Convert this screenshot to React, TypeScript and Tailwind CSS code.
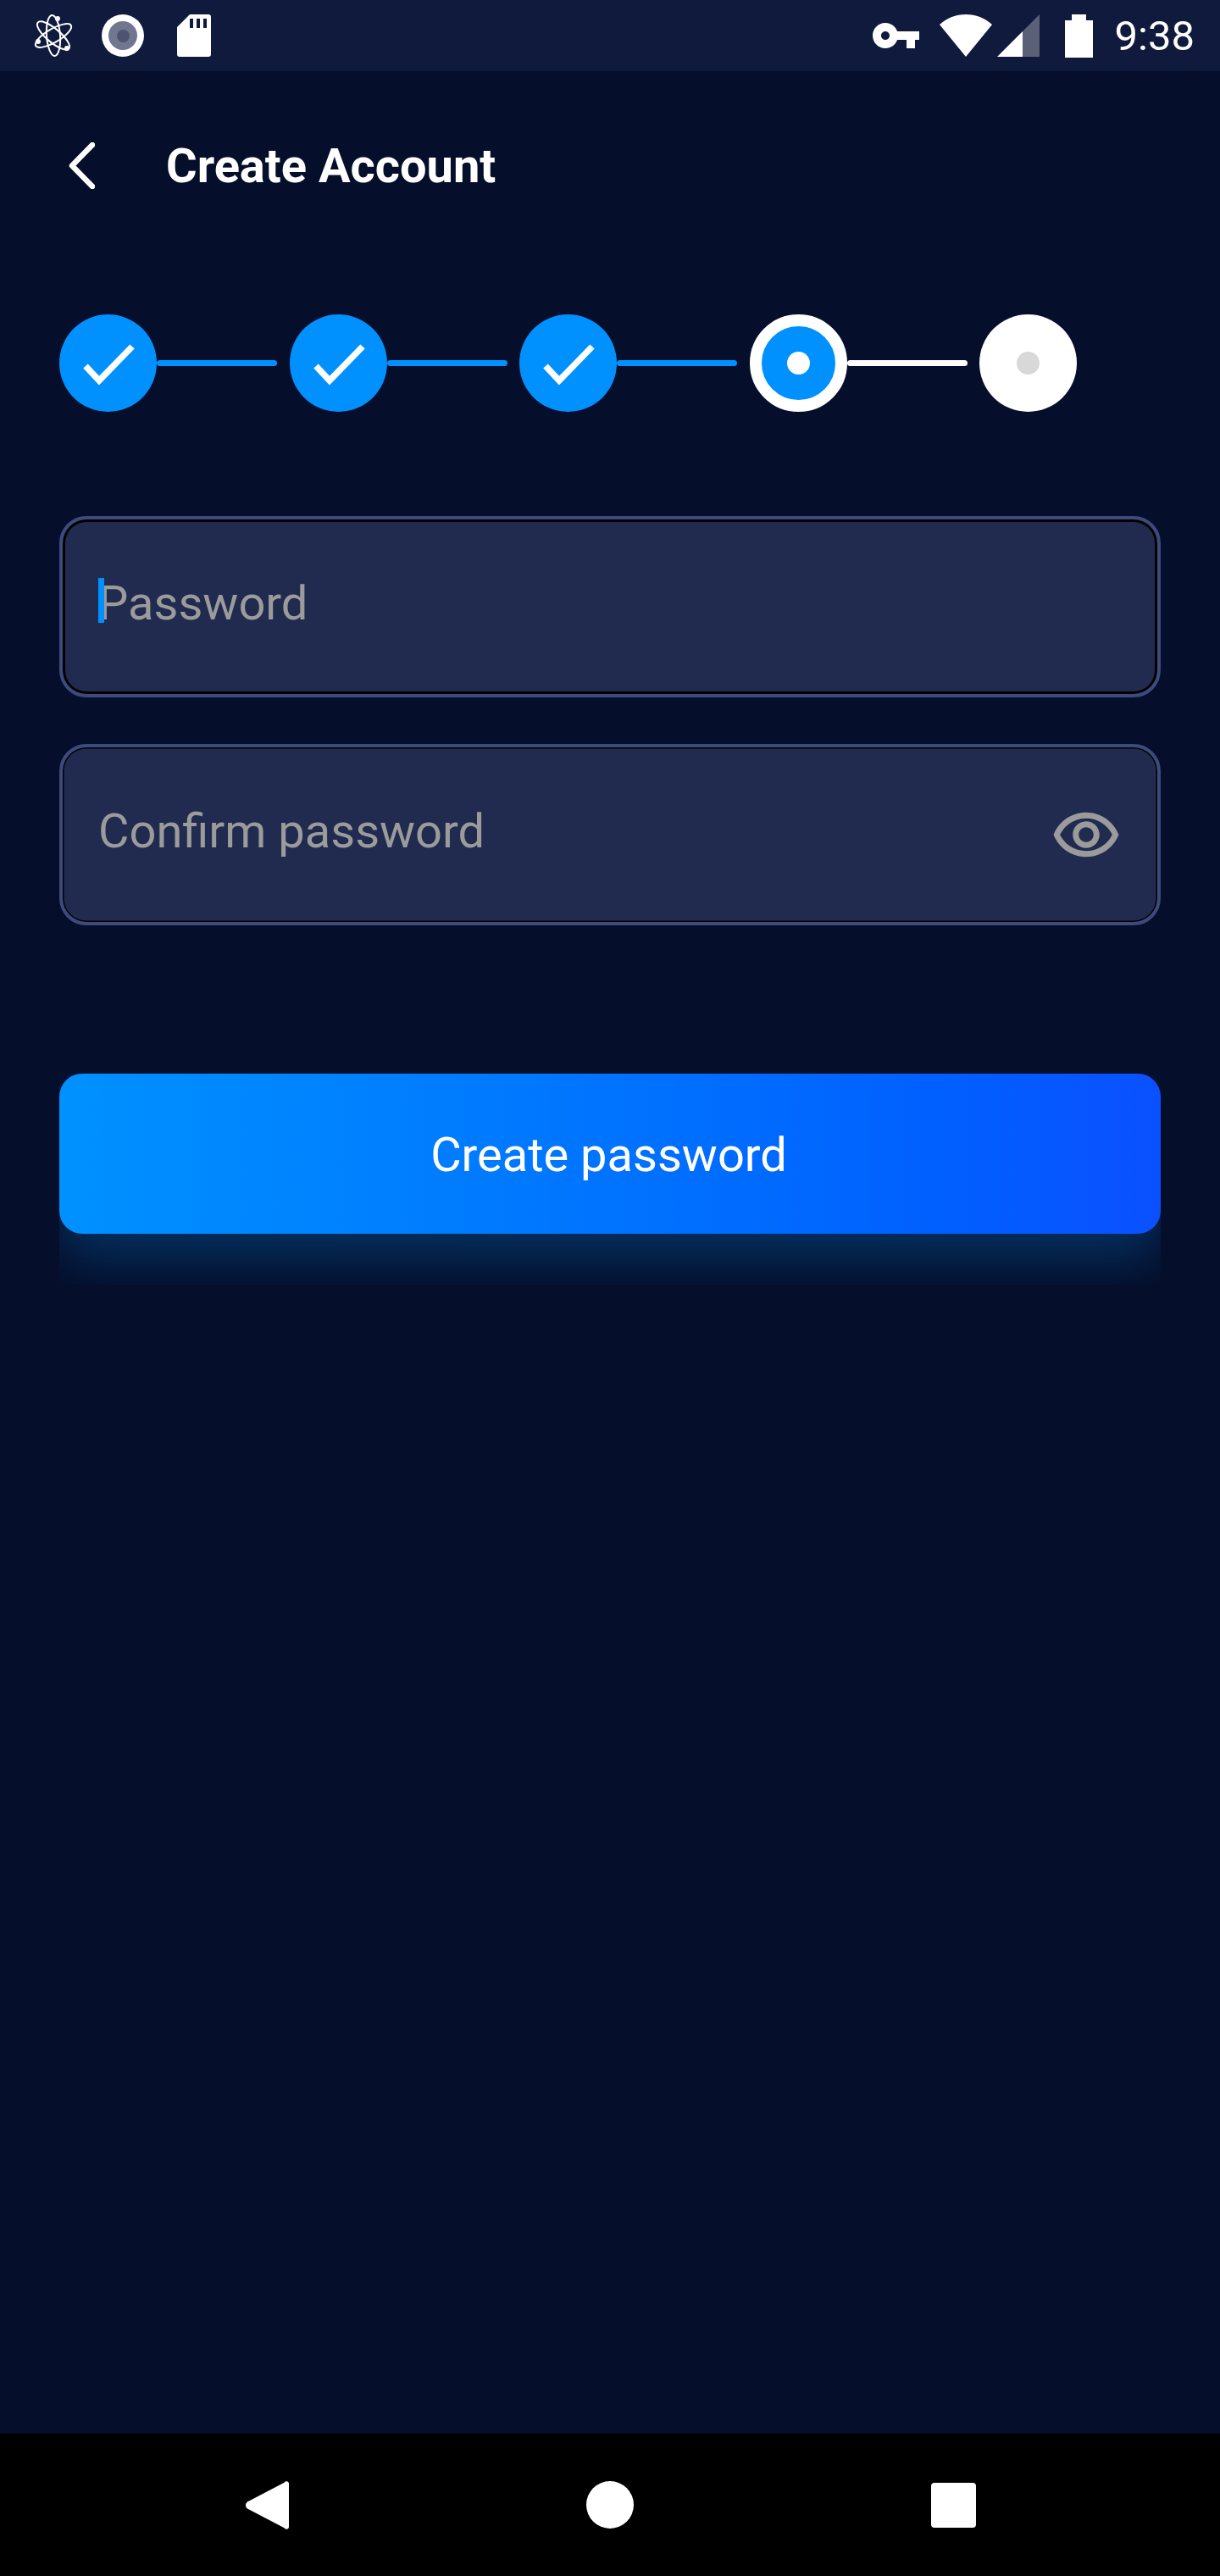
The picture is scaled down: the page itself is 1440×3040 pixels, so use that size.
function AtomIcon() {
  return (
    <svg viewBox="0 0 50 50" className="w-[50px] h-[50px] -ml-[2px]" fill="none" stroke="white" strokeWidth="2">
      <ellipse cx="25" cy="25" rx="8" ry="24" transform="rotate(-4 25 25)" />
      <ellipse cx="25" cy="25" rx="8" ry="24" transform="rotate(60 25 25)" />
      <ellipse cx="25" cy="25" rx="8" ry="24" transform="rotate(-50 25 25)" />
      <circle cx="30" cy="5" r="3" fill="white" stroke="none" />
      <circle cx="7" cy="32" r="3" fill="white" stroke="none" />
      <circle cx="41" cy="40" r="3" fill="white" stroke="none" />
    </svg>
  );
}

function StatusBar() {
  return (
    <div className="h-[84px] shrink-0 bg-[#0f1a3d] flex items-center justify-between pl-[40px] pr-[30px]">
      <div className="flex items-center">
        <AtomIcon />
        <div className="ml-[32px] w-[50px] h-[50px] rounded-full bg-white flex items-center justify-center">
          <div className="w-[34px] h-[34px] rounded-full bg-[#717790] flex items-center justify-center">
            <div className="w-[15px] h-[15px] rounded-full bg-[#4d5370]" />
          </div>
        </div>
        <svg viewBox="0 0 40 50" className="ml-[39px] w-[40px] h-[50px]">
          <path
            fill="white"
            fillRule="evenodd"
            d="M15 0H37a3 3 0 0 1 3 3V47a3 3 0 0 1-3 3H3a3 3 0 0 1-3-3V15ZM15 5v11h4V5ZM23 5v11h4V5ZM31 5v11h4V5Z"
          />
        </svg>
      </div>
      <div className="flex items-center">
        <svg viewBox="1 6 22 12" className="w-[55px] h-[30px]" preserveAspectRatio="none">
          <path
            fill="white"
            d="M12.65 10C11.83 7.67 9.61 6 7 6c-3.31 0-6 2.69-6 6s2.69 6 6 6c2.61 0 4.83-1.67 5.65-4H17v4h4v-4h2v-4H12.65zM7 14c-1.1 0-2-.9-2-2s.9-2 2-2 2 .9 2 2-.9 2-2 2z"
          />
        </svg>
        <svg viewBox="0 0 62 50" className="ml-[24px] w-[62px] h-[50px]">
          <path fill="white" d="M31 50L0 12C9 4 19 0 31 0S53 4 62 12Z" />
        </svg>
        <svg viewBox="0 0 50 50" className="ml-[6px] w-[50px] h-[50px]">
          <path fill="#5a6076" d="M50 0V50H30V20Z" />
          <path fill="white" d="M30 20V50H0Z" />
        </svg>
        <svg viewBox="0 0 33 51" className="ml-[30px] w-[33px] h-[51px]">
          <path fill="white" d="M8 0H25V7H33V51H0V7H8Z" />
        </svg>
        <span className="ml-[26px] font-['Roboto',sans-serif] text-[49px] leading-none text-white">9:38</span>
      </div>
    </div>
  );
}

function StepLine({ color }: { color: string }) {
  return <div className={`w-[142px] h-[7px] rounded-full mr-[14.5px] ${color}`} />;
}

function DoneStep() {
  return (
    <>
      <div className="w-[115px] h-[115px] rounded-full bg-[#0091ff]">
        <svg viewBox="0 0 115 115" className="w-[115px] h-[115px]" fill="none">
          <path d="M31 61L47 78L86 38" stroke="white" strokeWidth="7.5" />
        </svg>
      </div>
      <StepLine color="bg-[#0091ff]" />
    </>
  );
}

function Stepper() {
  return (
    <div className="mt-[148px] flex items-center">
      <DoneStep />
      <DoneStep />
      <DoneStep />
      <div className="w-[115px] h-[115px] rounded-full bg-[#0091ff] border-[14px] border-white flex items-center justify-center">
        <div className="w-[27px] h-[27px] rounded-full bg-white" />
      </div>
      <StepLine color="bg-white" />
      <div className="w-[115px] h-[115px] rounded-full bg-white flex items-center justify-center">
        <div className="w-[27px] h-[27px] rounded-full bg-[#d8d8d8]" />
      </div>
    </div>
  );
}

function Field({ label, focused, children }: { label: string; focused?: boolean; children?: React.ReactNode }) {
  return (
    <div
      className={`h-[214px] rounded-[32px] border-[4px] border-[#3d4a7c] bg-[#202b4f] flex items-center justify-between pl-[42px] pr-[44px] pb-[8px] ${
        focused ? "shadow-[inset_0_0_0_3px_#000]" : "shadow-[inset_0_0_0_1.5px_#000]"
      }`}
    >
      <span className="relative text-[56px] leading-none text-[#9b9b9b]">
        {focused && <span className="absolute left-[0px] top-[-2px] w-[7px] h-[53px] bg-[#0091ff]" />}
        {label}
      </span>
      {children}
    </div>
  );
}

function EyeIcon() {
  return (
    <svg viewBox="0 0 24 24" className="w-[84px] h-[84px] mt-[8px] -mr-[2px]" fill="#9b9b9b">
      <path d="M12 6.5c3.79 0 7.17 2.13 8.82 5.5-1.65 3.37-5.02 5.5-8.82 5.5S4.83 15.37 3.18 12C4.83 8.63 8.21 6.5 12 6.5m0-2C7 4.5 2.73 7.61 1 12c1.73 4.39 6 7.5 11 7.5s9.27-3.11 11-7.5c-1.73-4.39-6-7.5-11-7.5zm0 5c1.38 0 2.5 1.12 2.5 2.5s-1.12 2.5-2.5 2.5-2.5-1.12-2.5-2.5 1.12-2.5 2.5-2.5m0-2c-2.48 0-4.5 2.02-4.5 4.5s2.02 4.5 4.5 4.5 4.5-2.02 4.5-4.5-2.02-4.5-4.5-4.5z" />
    </svg>
  );
}

function NavBar() {
  return (
    <div className="h-[168px] shrink-0 bg-black grid grid-cols-[405px_405px_405px] justify-center items-center">
      <svg viewBox="0 0 51 57" className="justify-self-center w-[51px] h-[57px]">
        <path
          fill="white"
          d="M47 0.5C49 -0.5 51 1 51 3V54C51 56 49 57.5 47 56.5C46.5 56.2 46 55.8 45.5 55.2L2 32.5C-0.7 30 -0.7 27 2 24.5L45.5 1.8C46 1.2 46.5 0.8 47 0.5Z"
        />
      </svg>
      <div className="justify-self-center w-[56px] h-[56px] rounded-full bg-white" />
      <div className="justify-self-center w-[53px] h-[53px] rounded-[4px] bg-white" />
    </div>
  );
}

export default function App() {
  return (
    <div className="w-[1440px] h-[3040px] flex flex-col bg-[#050e2a] font-['Roboto',sans-serif]">
      <StatusBar />
      <main className="flex-1 px-[70px]">
        <div className="mt-[84px] h-[55px] flex items-center">
          <svg viewBox="0 0 31 55" className="ml-[11px] w-[31px] h-[55px]" fill="none">
            <path d="M28 3L4 27.500L28 52" stroke="white" strokeWidth="6.5" strokeLinecap="round" strokeLinejoin="round" />
          </svg>
          <h1 className="ml-[84px] text-[56px] leading-none font-bold text-white">Create Account</h1>
        </div>
        <Stepper />
        <div className="mt-[123px] flex flex-col gap-[55px]">
          <Field label="Password" focused />
          <Field label="Confirm password">
            <EyeIcon />
          </Field>
        </div>
        <div className="relative mt-[175px]">
          <div className="absolute inset-x-0 top-0 h-[249px] overflow-hidden">
            <div className="h-[189px] rounded-[27px] shadow-[0_30px_60px_rgba(0,145,255,0.26)]" />
          </div>
          <button className="relative w-full h-[189px] pr-[3px] pt-[2px] rounded-[27px] bg-gradient-to-r from-[#0091ff] to-[#0b50ff] text-white text-[56px] leading-none">
            Create password
          </button>
        </div>
      </main>
      <NavBar />
    </div>
  );
}
